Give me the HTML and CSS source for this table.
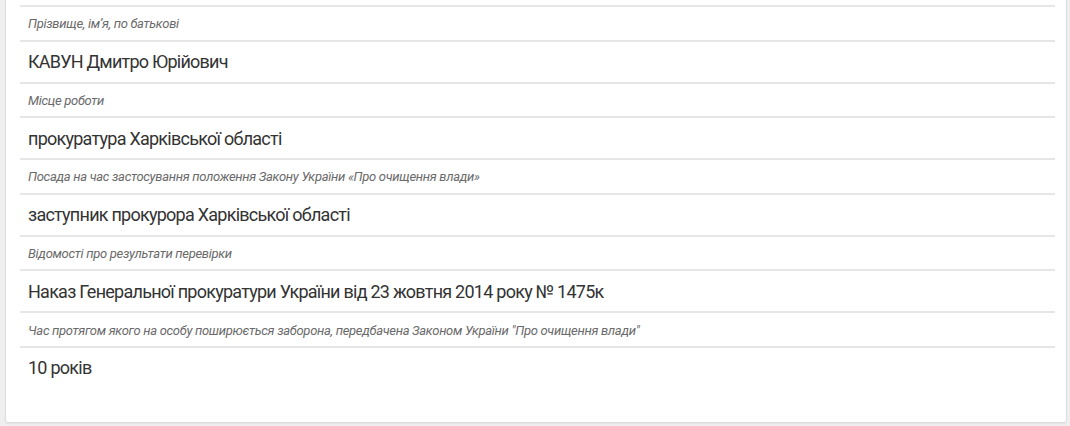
FILE: index.html
```html
<!DOCTYPE html>
<html lang="uk">
<head>
<meta charset="utf-8">
<link rel="stylesheet" href="styles.css">
</head>
<body>
<div class="card">
  <dl class="list">
    <dt class="label">Прізвище, ім’я, по батькові</dt>
    <dd class="value">КАВУН Дмитро Юрійович</dd>
    <dt class="label">Місце роботи</dt>
    <dd class="value">прокуратура Харківської області</dd>
    <dt class="label">Посада на час застосування положення Закону України «Про очищення влади»</dt>
    <dd class="value">заступник прокурора Харківської області</dd>
    <dt class="label">Відомості про результати перевірки</dt>
    <dd class="value">Наказ Генеральної прокуратури України від 23 жовтня 2014 року № 1475к</dd>
    <dt class="label">Час протягом якого на особу поширюється заборона, передбачена Законом України "Про очищення влади"</dt>
    <dd class="value">10 років</dd>
  </dl>
</div>
</body>
</html>
```

FILE: styles.css
```css
html, body {
  margin: 0;
  padding: 0;
}
body {
  background: #efefef;
  font-family: Roboto, "Noto Sans", sans-serif;
  width: 1070px;
  height: 426px;
  overflow: hidden;
}
.card {
  margin: -4px 3px 0 5px;
  height: 427px;
  box-sizing: border-box;
  background: #fff;
  border: 1px solid #dedede;
  border-radius: 3px;
  box-shadow: 0 1px 2px rgba(0, 0, 0, 0.06);
  padding: 8px 11px 0 14px;
}
.list {
  margin: 0;
  padding: 0;
}
.label, .value {
  margin: 0;
  border-top: 2px solid #e6e6e6;
  padding-left: 8px;
  display: flex;
  align-items: center;
  box-sizing: border-box;
}
.label {
  height: 34.6px;
  font-size: 13px;
  font-style: italic;
  color: #6a6a6a;
  letter-spacing: -0.3px;
  padding-top: 1px;
}
.value {
  height: 42px;
  font-size: 18px;
  color: #333;
  letter-spacing: -0.75px;
}
```
